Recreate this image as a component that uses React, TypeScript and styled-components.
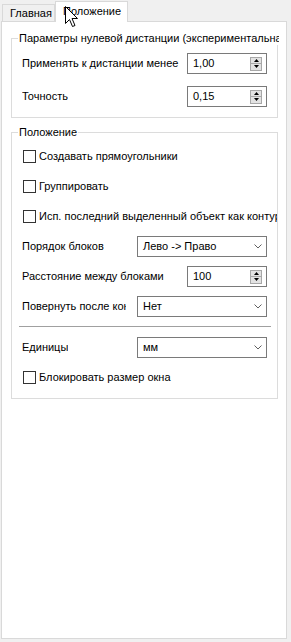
import React from "react";
import styled, { createGlobalStyle } from "styled-components";

const GlobalStyle = createGlobalStyle`
  html, body {
    margin: 0;
    padding: 0;
    background: #f0f0f0;
  }
  body {
    font-family: "Liberation Sans", Arial, sans-serif;
    font-size: 11px;
    line-height: 13px;
    color: #000;
  }
`;

const Window = styled.div`
  position: relative;
  width: 291px;
  height: 642px;
  background: #f0f0f0;
  display: flex;
  flex-direction: column;
  overflow: hidden;
`;

const TabStrip = styled.div`
  display: flex;
  align-items: flex-end;
  height: 21px;
  padding-left: 2px;
  position: relative;
  z-index: 1;
`;

const Tab = styled.div<{ $active?: boolean }>`
  box-sizing: border-box;
  height: ${(p) => (p.$active ? "21px" : "17px")};
  width: ${(p) => (p.$active ? "73px" : "53px")};
  margin-bottom: ${(p) => (p.$active ? "-1px" : "0")};
  padding: ${(p) => (p.$active ? "3px 0 0 7px" : "2px 0 0 7px")};
  background: ${(p) => (p.$active ? "#fff" : "#f0f0f0")};
  border: 1px solid #d9d9d9;
  border-bottom: none;
  white-space: nowrap;
`;

const Panel = styled.div`
  flex: 1;
  margin: 0 4px 3px 1px;
  padding: 10px 8px 0 9px;
  background: #fff;
  border: 1px solid #d9d9d9;
  display: flex;
  flex-direction: column;
  gap: 8px;
`;

const Group = styled.fieldset`
  margin: 0;
  min-width: 0;
  padding: 0 10px 10px 10px;
  border: 1px solid #dcdcdc;
`;

const Legend = styled.legend`
  margin-left: -4px;
  padding: 0 1px;
  max-width: 259px;
  overflow: hidden;
  white-space: nowrap;
  line-height: 13px;
`;

const Rows = styled.div<{ $gap: number; $top: number }>`
  display: flex;
  flex-direction: column;
  gap: ${(p) => p.$gap}px;
  margin-top: ${(p) => p.$top}px;
`;

const Row = styled.div`
  display: flex;
  align-items: center;
  height: 21px;
`;

const Label = styled.span<{ $width?: number }>`
  width: ${(p) => (p.$width ? `${p.$width}px` : "auto")};
  overflow: hidden;
  white-space: nowrap;
`;

const SpinBox = styled.div`
  box-sizing: border-box;
  margin-left: auto;
  width: 80px;
  height: 21px;
  border: 1px solid #7a7a7a;
  padding: 0 4px 0 5px;
  display: flex;
  align-items: center;
  background: #fff;
`;

const Value = styled.span`
  flex: 1;
`;

const SpinButtons = styled.div`
  display: flex;
  flex-direction: column;
  width: 12px;
`;

const SpinButton = styled.div`
  box-sizing: border-box;
  height: 7px;
  background: #e3e3e3;
  border: 1px solid #a8a8a8;
  display: flex;
  align-items: center;
  justify-content: center;
  & + & {
    border-top: none;
  }
`;

const Combo = styled.div`
  box-sizing: border-box;
  margin-left: auto;
  width: 130px;
  height: 21px;
  border: 1px solid #7a7a7a;
  padding: 0 4px 0 5px;
  display: flex;
  align-items: center;
  justify-content: space-between;
  background: #fff;
`;

const CheckRow = styled.label`
  display: flex;
  align-items: center;
  height: 21px;
  white-space: nowrap;
  overflow: hidden;
  margin-right: -10px;
`;

const Box = styled.span`
  box-sizing: border-box;
  flex: none;
  width: 13px;
  height: 13px;
  margin-left: 1px;
  margin-right: 3px;
  border: 1px solid #333;
  background: #fff;
`;

const Separator = styled.div`
  height: 1px;
  background: #a0a0a0;
  margin: 0 -4px 1px -3px;
`;

const Cursor = styled.svg`
  position: absolute;
  left: 65px;
  top: 6px;
  z-index: 5;
`;

const Arrow = ({ down }: { down?: boolean }) => (
  <svg width="5" height="3" viewBox="0 0 5 3">
    <path d={down ? "M0 0H5L2.5 3Z" : "M0 3H5L2.5 0Z"} fill="#000" />
  </svg>
);

const Spin = ({ value }: { value: string }) => (
  <SpinBox>
    <Value>{value}</Value>
    <SpinButtons>
      <SpinButton>
        <Arrow />
      </SpinButton>
      <SpinButton>
        <Arrow down />
      </SpinButton>
    </SpinButtons>
  </SpinBox>
);

const Select = ({ value }: { value: string }) => (
  <Combo>
    <span>{value}</span>
    <svg width="8" height="5" viewBox="0 0 8 5">
      <path d="M0.5 0.5L4 4L7.5 0.5" fill="none" stroke="#606060" strokeWidth="1" />
    </svg>
  </Combo>
);

const Check = ({ text }: { text: string }) => (
  <CheckRow>
    <Box />
    <span>{text}</span>
  </CheckRow>
);

const App = () => {
  return (
    <Window>
      <GlobalStyle />
      <TabStrip>
        <Tab>Главная</Tab>
        <Tab $active>Положение</Tab>
      </TabStrip>
      <Panel>
        <Group>
          <Legend>Параметры нулевой дистанции (экспериментальная)</Legend>
          <Rows $gap={12} $top={8}>
            <Row>
              <Label $width={158}>Применять к дистанции менее</Label>
              <Spin value="1,00" />
            </Row>
            <Row>
              <Label>Точность</Label>
              <Spin value="0,15" />
            </Row>
          </Rows>
        </Group>
        <Group>
          <Legend>Положение</Legend>
          <Rows $gap={9} $top={7}>
            <Check text="Создавать прямоугольники" />
            <Check text="Группировать" />
            <Check text="Исп. последний выделенный объект как контур" />
            <Row>
              <Label>Порядок блоков</Label>
              <Select value="Лево -> Право" />
            </Row>
            <Row>
              <Label $width={160}>Расстояние между блоками</Label>
              <Spin value="100" />
            </Row>
            <Row>
              <Label $width={104}>Повернуть после контура</Label>
              <Select value="Нет" />
            </Row>
            <Separator />
            <Row>
              <Label>Единицы</Label>
              <Select value="мм" />
            </Row>
            <Check text="Блокировать размер окна" />
          </Rows>
        </Group>
      </Panel>
      <Cursor width="13" height="21" viewBox="0 0 13 21">
        <path
          d="M0.5 0.5V17.5L4.5 13.5L7.5 20.5L10 19.5L7 12.5H12.5Z"
          fill="#fff"
          stroke="#000"
          strokeWidth="1"
          strokeLinejoin="miter"
        />
      </Cursor>
    </Window>
  );
};

export default App;
